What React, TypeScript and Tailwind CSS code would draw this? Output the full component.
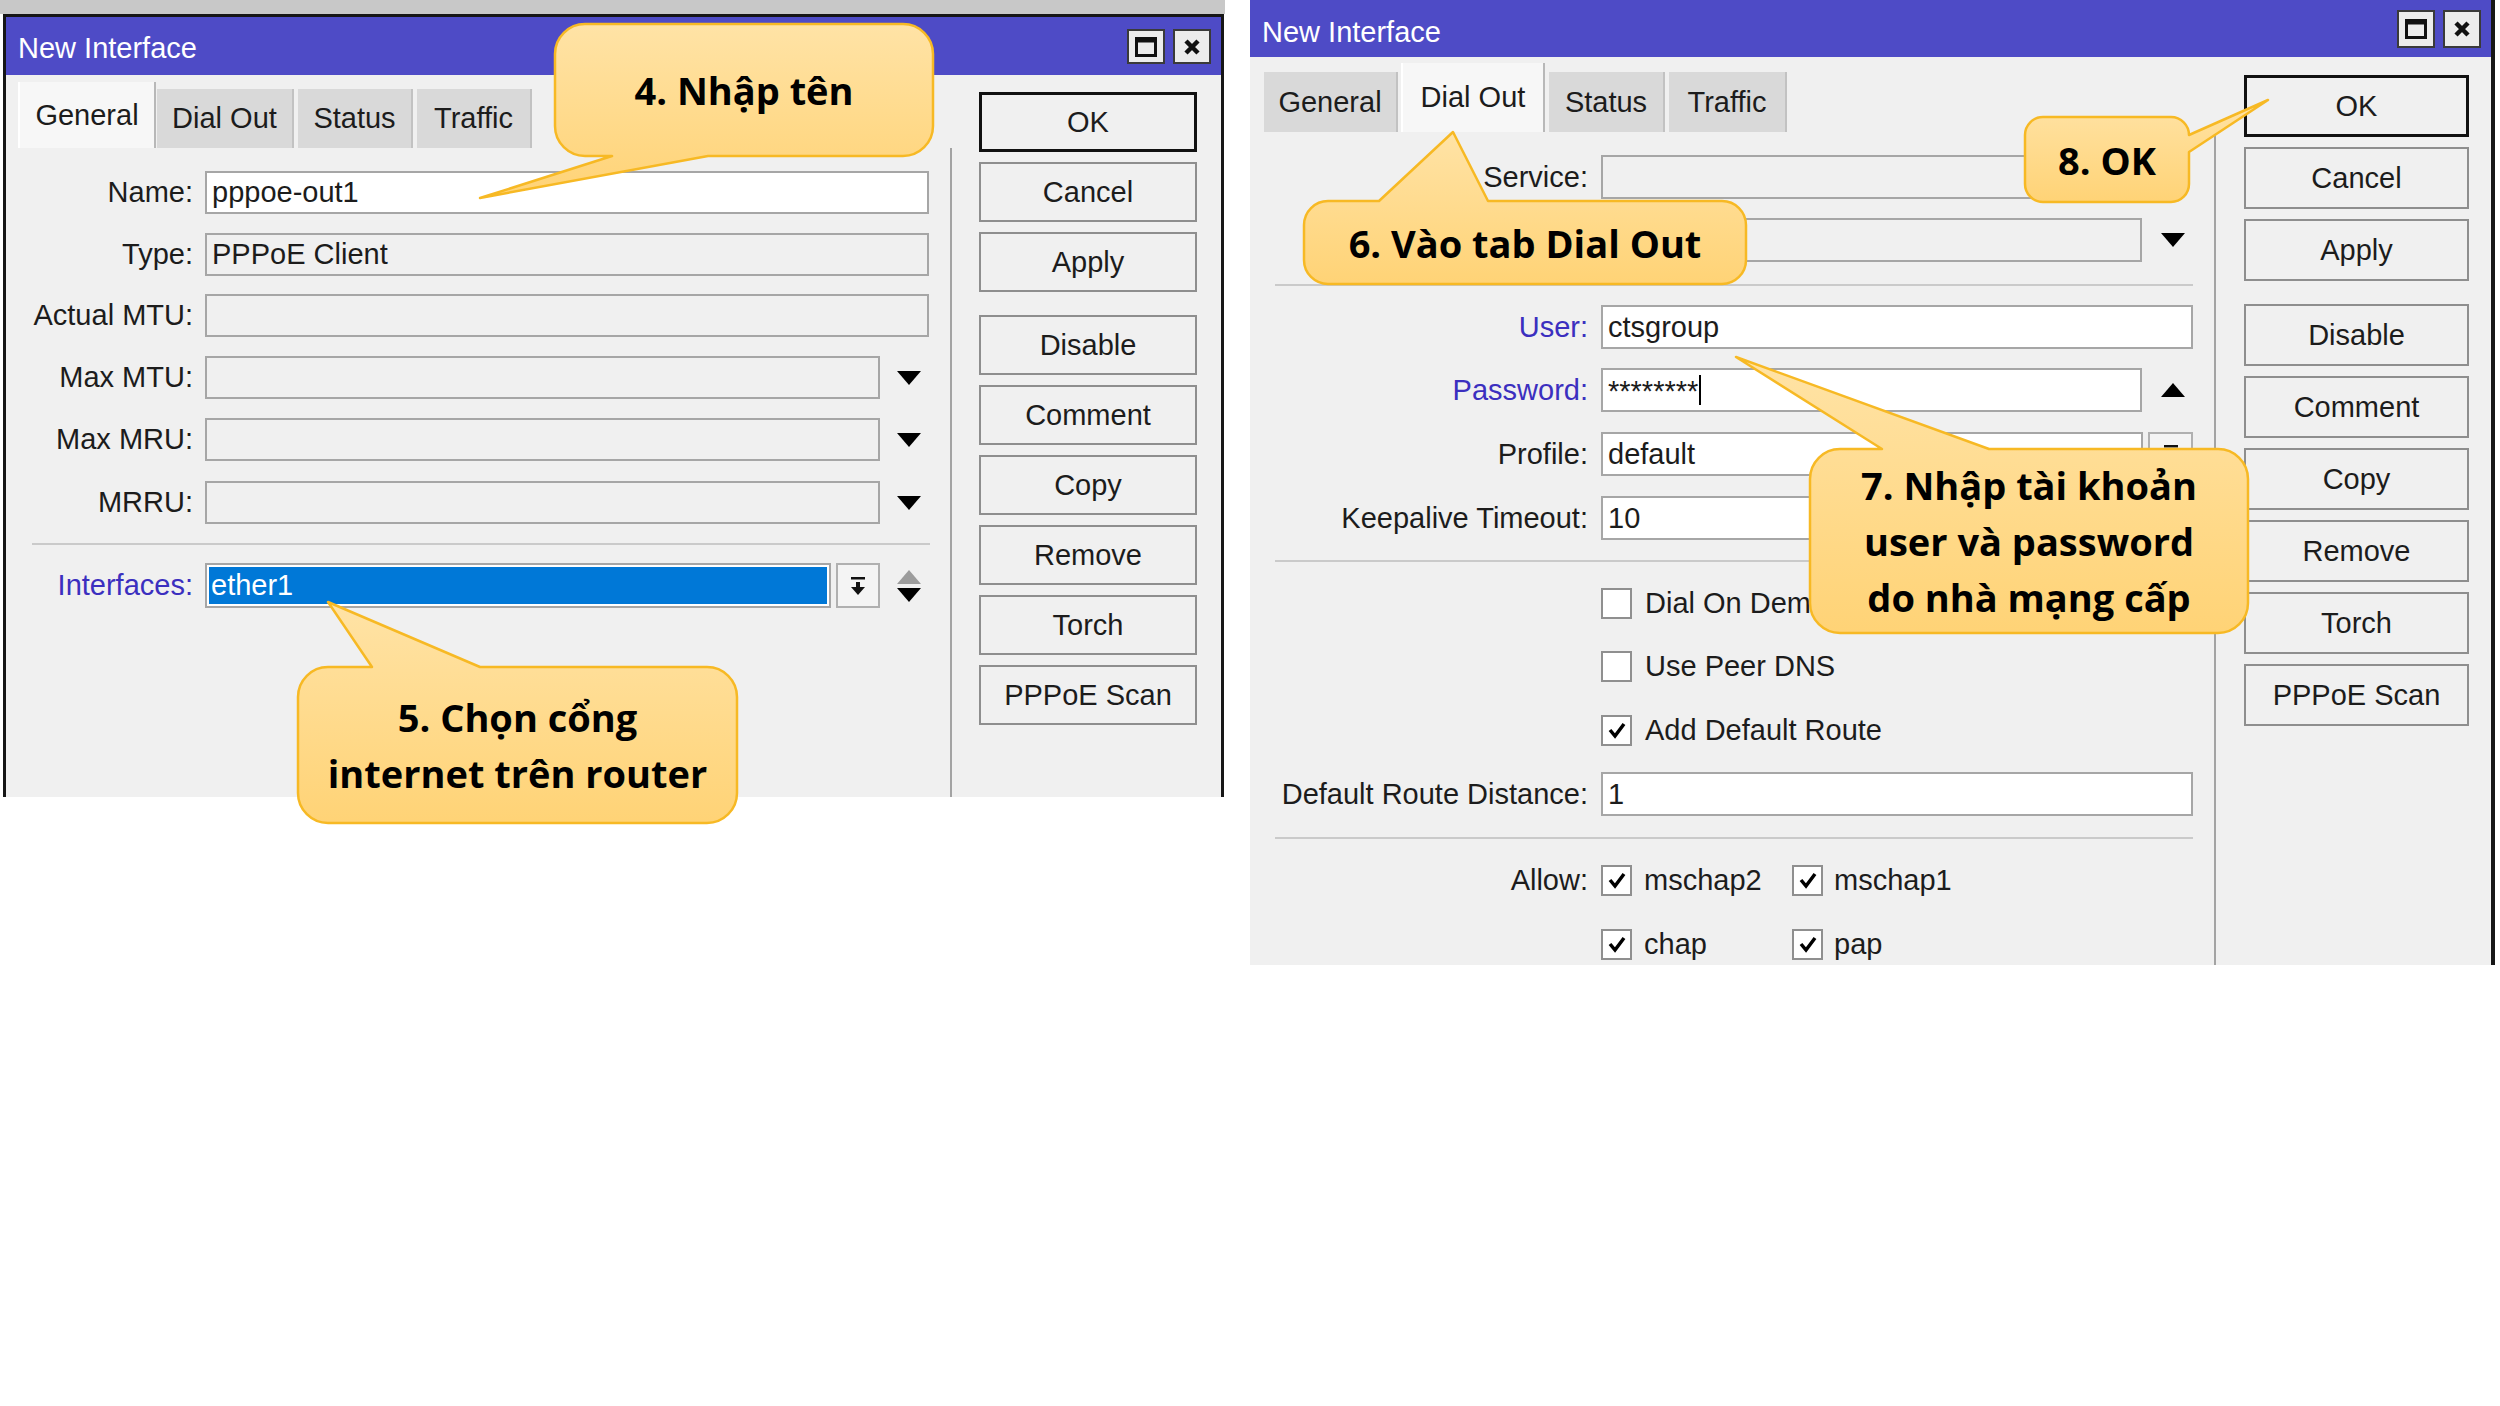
import React from 'react';

type Tail = { side: 'top' | 'bottom' | 'right'; a: number; b: number; tx: number; ty: number };

function bubblePath(w: number, h: number, r: number, t: Tail) {
  let d = `M${r} 0 `;
  if (t.side === 'top') d += `L${t.a} 0 L${t.tx} ${t.ty} L${t.b} 0 `;
  d += `L${w - r} 0 A${r} ${r} 0 0 1 ${w} ${r} `;
  if (t.side === 'right') d += `L${w} ${t.a} L${t.tx} ${t.ty} L${w} ${t.b} `;
  d += `L${w} ${h - r} A${r} ${r} 0 0 1 ${w - r} ${h} `;
  if (t.side === 'bottom') d += `L${t.b} ${h} L${t.tx} ${t.ty} L${t.a} ${h} `;
  d += `L${r} ${h} A${r} ${r} 0 0 1 0 ${h - r} L0 ${r} A${r} ${r} 0 0 1 ${r} 0 Z`;
  return d;
}

const Callout = ({ id, cls, w, h, r, tail, lines }: { id: string; cls: string; w: number; h: number; r: number; tail: Tail; lines: string[] }) => (
  <div className={`absolute ${cls} flex flex-col items-center justify-center`}>
    <svg className="absolute left-0 top-0 overflow-visible" width={w} height={h}>
      <defs>
        <linearGradient id={id} x1="0" y1="0" x2="0" y2="1">
          <stop offset="0" stopColor="#ffe3a6" />
          <stop offset="1" stopColor="#ffd376" />
        </linearGradient>
      </defs>
      <path d={bubblePath(w, h, r, tail)} fill={`url(#${id})`} stroke="#f7b924" strokeWidth="2.5" strokeLinejoin="round" />
    </svg>
    {lines.map((l) => (
      <div key={l} className="relative font-['Open_Sans',sans-serif] font-bold text-[38px] leading-[56px] text-black whitespace-nowrap">
        {l}
      </div>
    ))}
  </div>
);

const Tri = ({ up = false, gray = false }: { up?: boolean; gray?: boolean }) => (
  <svg width="24" height="14" viewBox="0 0 24 14">
    <polygon points={up ? '0,14 24,14 12,0' : '0,0 24,0 12,14'} fill={gray ? '#9c9c9c' : '#000'} />
  </svg>
);

const Label = ({ w, blue, children }: { w: string; blue?: boolean; children?: React.ReactNode }) => (
  <div className={`${w} shrink-0 text-right whitespace-nowrap ${blue ? 'text-[#3b2fbf]' : ''}`}>{children}</div>
);

const Box = ({ cls, white, children }: { cls: string; white?: boolean; children?: React.ReactNode }) => (
  <div className={`${cls} h-full shrink-0 border-2 border-[#a6a6a6] ${white ? 'bg-white' : 'bg-[#f0f0f0]'} flex items-center pl-[5px] overflow-hidden whitespace-nowrap`}>
    {children}
  </div>
);

const Check = ({ on }: { on?: boolean }) => (
  <div className="w-[31px] h-[31px] shrink-0 border-2 border-[#8f8f8f] bg-white flex items-center justify-center">
    {on && (
      <svg width="20" height="18" viewBox="0 0 20 18">
        <path d="M3 9 L8 15 L17 3" stroke="#000" strokeWidth="3.5" fill="none" />
      </svg>
    )}
  </div>
);

const Button = ({ label, ok, cls }: { label: string; ok?: boolean; cls: string }) => (
  <div className={`${cls} shrink-0 flex items-center justify-center bg-[#f0f0f0] ${ok ? 'border-[3px] border-[#111]' : 'border-2 border-[#8e8e8e]'}`}>
    {label}
  </div>
);

const Tab = ({ label, active, cls }: { label: string; active?: boolean; cls: string }) => (
  <div className={`${cls} shrink-0 flex items-center justify-center border-r-2 ${active ? 'bg-[#f7f7f7] border-l-2 border-l-white border-r-[#b8b8b8]' : 'bg-[#d9d9d9] border-r-[#c2c2c2]'}`}>
    {label}
  </div>
);

const TitleButtons = ({ size }: { size: string }) => (
  <div className="flex gap-[8px]">
    <div className={`${size} bg-[#ececec] border-2 border-[#3a3a3a] flex items-center justify-center`}>
      <svg width="22" height="20" viewBox="0 0 22 20">
        <rect x="1.5" y="1.5" width="19" height="17" fill="none" stroke="#111" strokeWidth="3" />
        <rect x="1.5" y="1.5" width="19" height="4" fill="#111" />
      </svg>
    </div>
    <div className={`${size} bg-[#ececec] border-2 border-[#3a3a3a] flex items-center justify-center`}>
      <svg width="18" height="18" viewBox="0 0 18 18">
        <path d="M3 3 L15 15 M15 3 L3 15" stroke="#111" strokeWidth="4.5" />
      </svg>
    </div>
  </div>
);

const PickBtn = ({ cls }: { cls: string }) => (
  <div className={`${cls} h-full shrink-0 border-2 border-[#b0b0b0] bg-[#f4f4f4] flex items-center justify-center`}>
    <svg width="16" height="20" viewBox="0 0 16 20">
      <rect x="1" y="1" width="14" height="2.5" fill="#111" />
      <rect x="6" y="6" width="4" height="6" fill="#111" />
      <polygon points="1,11 15,11 8,19" fill="#111" />
    </svg>
  </div>
);

const leftButtons: [string, string][] = [
  ['OK', ''],
  ['Cancel', 'mt-[10px]'],
  ['Apply', 'mt-[10px]'],
  ['Disable', 'mt-[23px]'],
  ['Comment', 'mt-[10px]'],
  ['Copy', 'mt-[10px]'],
  ['Remove', 'mt-[10px]'],
  ['Torch', 'mt-[10px]'],
  ['PPPoE Scan', 'mt-[10px]'],
];

const LeftDialog = () => (
  <div className="ml-[3px] w-[1221px] h-[783px] border-x-[3px] border-t-[3px] border-[#161616] bg-[#f0f0f0] flex flex-col overflow-hidden">
    <div className="h-[58px] shrink-0 bg-[#4e4bc6] flex items-start justify-between pl-[12px] pr-[10px]">
      <div className="text-white mt-[17px]">New Interface</div>
      <div className="mt-[12px]">
        <TitleButtons size="w-[38px] h-[35px]" />
      </div>
    </div>
    <div className="flex flex-1">
      <div className="w-[946px] shrink-0 flex flex-col">
        <div className="mt-[7px] h-[66px] ml-[12px] flex items-end">
          <Tab label="General" active cls="w-[138px] h-[66px]" />
          <Tab label="Dial Out" cls="ml-[1px] w-[137px] h-[59px]" />
          <Tab label="Status" cls="ml-[4px] w-[115px] h-[59px]" />
          <Tab label="Traffic" cls="ml-[4px] w-[115px] h-[59px]" />
        </div>
        <div className="flex-1 ml-[9px] border-r-2 border-[#a3a3a3] flex flex-col">
          <div className="flex items-center h-[43px] mt-[23px]">
            <Label w="w-[190px] pr-[12px]">Name:</Label>
            <Box cls="w-[724px]" white>pppoe-out1</Box>
          </div>
          <div className="flex items-center h-[43px] mt-[19px]">
            <Label w="w-[190px] pr-[12px]">Type:</Label>
            <Box cls="w-[724px]">PPPoE Client</Box>
          </div>
          <div className="flex items-center h-[43px] mt-[18px]">
            <Label w="w-[190px] pr-[12px]">Actual MTU:</Label>
            <Box cls="w-[724px]" />
          </div>
          {['Max MTU:', 'Max MRU:', 'MRRU:'].map((l, i) => (
            <div key={l} className={`flex items-center h-[43px] ${i === 2 ? 'mt-[20px]' : 'mt-[19px]'}`}>
              <Label w="w-[190px] pr-[12px]">{l}</Label>
              <Box cls="w-[675px]" />
              <div className="w-[58px] h-full flex items-center justify-center">
                <Tri />
              </div>
            </div>
          ))}
          <div className="mt-[19px] h-[2px] ml-[17px] w-[898px] bg-[#cacaca]" />
          <div className="flex items-center h-[45px] mt-[18px]">
            <Label w="w-[190px] pr-[12px]" blue>
              Interfaces:
            </Label>
            <div className="w-[626px] h-full shrink-0 border-2 border-[#a6a6a6] bg-white p-[2px]">
              <div className="h-full bg-[#0078d7] text-white flex items-center pl-[2px]">ether1</div>
            </div>
            <div className="w-[5px]" />
            <PickBtn cls="w-[44px]" />
            <div className="w-[58px] h-full flex flex-col items-center justify-center gap-[4px]">
              <Tri up gray />
              <Tri />
            </div>
          </div>
        </div>
      </div>
      <div className="pl-[27px] pt-[17px] flex flex-col">
        {leftButtons.map(([l, m]) => (
          <Button key={l} label={l} ok={l === 'OK'} cls={`w-[218px] h-[60px] ${m}`} />
        ))}
      </div>
    </div>
  </div>
);

const RightDialog = () => (
  <div className="w-[1245px] h-[965px] border-r-4 border-[#161616] bg-[#f0f0f0] flex flex-col overflow-hidden">
    <div className="h-[57px] shrink-0 bg-[#4e4bc6] flex items-start justify-between pl-[12px] pr-[10px]">
      <div className="text-white mt-[18px]">New Interface</div>
      <div className="mt-[10px]">
        <TitleButtons size="w-[38px] h-[38px]" />
      </div>
    </div>
    <div className="flex flex-1">
      <div className="w-[966px] shrink-0 flex flex-col">
        <div className="mt-[6px] h-[69px] ml-[14px] flex items-end">
          <Tab label="General" cls="w-[134px] h-[60px]" />
          <Tab label="Dial Out" active cls="ml-[3px] w-[144px] h-[69px]" />
          <Tab label="Status" cls="ml-[4px] w-[116px] h-[60px]" />
          <Tab label="Traffic" cls="ml-[4px] w-[118px] h-[60px]" />
        </div>
        <div className="flex-1 border-r-2 border-[#a3a3a3] flex flex-col">
          <div className="flex items-center h-[44px] mt-[23px]">
            <Label w="w-[351px] pr-[13px]">Service:</Label>
            <Box cls="w-[541px]" />
            <div className="w-[62px] h-full flex items-center justify-center">
              <Tri />
            </div>
          </div>
          <div className="flex items-center h-[44px] mt-[19px]">
            <div className="w-[351px] shrink-0" />
            <Box cls="w-[541px]" />
            <div className="w-[62px] h-full flex items-center justify-center">
              <Tri />
            </div>
          </div>
          <div className="mt-[22px] h-[2px] ml-[25px] w-[918px] bg-[#cacaca]" />
          <div className="flex items-center h-[44px] mt-[19px]">
            <Label w="w-[351px] pr-[13px]" blue>
              User:
            </Label>
            <Box cls="w-[592px]" white>
              ctsgroup
            </Box>
          </div>
          <div className="flex items-center h-[44px] mt-[19px]">
            <Label w="w-[351px] pr-[13px]" blue>
              Password:
            </Label>
            <Box cls="w-[541px]" white>
              <span className="pt-[2px]">********</span>
              <span className="ml-[1px] w-[2px] h-[30px] bg-black" />
            </Box>
            <div className="w-[62px] h-full flex items-center justify-center">
              <Tri up />
            </div>
          </div>
          <div className="flex items-center h-[44px] mt-[20px]">
            <Label w="w-[351px] pr-[13px]">Profile:</Label>
            <Box cls="w-[542px]" white>
              default
            </Box>
            <div className="w-[5px]" />
            <PickBtn cls="w-[45px]" />
          </div>
          <div className="flex items-center h-[44px] mt-[20px]">
            <Label w="w-[351px] pr-[13px]">Keepalive Timeout:</Label>
            <Box cls="w-[592px]" white>
              10
            </Box>
          </div>
          <div className="mt-[20px] h-[2px] ml-[25px] w-[918px] bg-[#cacaca]" />
          {[
            ['Dial On Demand', false, 'mt-[19px]'],
            ['Use Peer DNS', false, 'mt-[19px]'],
            ['Add Default Route', true, 'mt-[20px]'],
          ].map(([l, on, m]) => (
            <div key={l as string} className={`flex items-center h-[44px] ${m}`}>
              <div className="w-[351px] shrink-0" />
              <Check on={on as boolean} />
              <div className="ml-[13px] whitespace-nowrap">{l as string}</div>
            </div>
          ))}
          <div className="flex items-center h-[44px] mt-[20px]">
            <Label w="w-[351px] pr-[13px]">Default Route Distance:</Label>
            <Box cls="w-[592px]" white>
              1
            </Box>
          </div>
          <div className="mt-[21px] h-[2px] ml-[25px] w-[918px] bg-[#cacaca]" />
          <div className="flex items-center h-[44px] mt-[19px]">
            <Label w="w-[351px] pr-[13px]">Allow:</Label>
            <div className="w-[191px] shrink-0 flex items-center">
              <Check on />
              <div className="ml-[12px]">mschap2</div>
            </div>
            <Check on />
            <div className="ml-[11px]">mschap1</div>
          </div>
          <div className="flex items-center h-[44px] mt-[20px]">
            <div className="w-[351px] shrink-0" />
            <div className="w-[191px] shrink-0 flex items-center">
              <Check on />
              <div className="ml-[12px]">chap</div>
            </div>
            <Check on />
            <div className="ml-[11px]">pap</div>
          </div>
        </div>
      </div>
      <div className="pl-[28px] pt-[18px] flex flex-col">
        {leftButtons.map(([l, m]) => (
          <Button key={l} label={l} ok={l === 'OK'} cls={`w-[225px] h-[62px] ${m}`} />
        ))}
      </div>
    </div>
  </div>
);

export default function App() {
  return (
    <div className="relative w-[2500px] h-[1406px] bg-white overflow-hidden flex items-start font-['Liberation_Sans',Arial,sans-serif] text-[29px] leading-none text-[#1c1c1c]">
      <div className="w-[1225px] shrink-0 flex flex-col">
        <div className="h-[14px] bg-[#c8c8c8]" />
        <LeftDialog />
      </div>
      <div className="ml-[25px] w-[1245px] shrink-0">
        <RightDialog />
      </div>

      <Callout
        id="c4"
        cls="left-[555px] top-[24px] w-[378px] h-[132px]"
        w={378}
        h={132}
        r={30}
        tail={{ side: 'bottom', a: 57, b: 153, tx: -75, ty: 174 }}
        lines={['4. Nhập tên']}
      />
      <Callout
        id="c5"
        cls="left-[298px] top-[667px] w-[439px] h-[156px]"
        w={439}
        h={156}
        r={30}
        tail={{ side: 'top', a: 74, b: 182, tx: 30, ty: -65 }}
        lines={['5. Chọn cổng', 'internet trên router']}
      />
      <Callout
        id="c6"
        cls="left-[1304px] top-[201px] w-[442px] h-[83px]"
        w={442}
        h={83}
        r={24}
        tail={{ side: 'top', a: 75, b: 184, tx: 149, ty: -69 }}
        lines={['6. Vào tab Dial Out']}
      />
      <Callout
        id="c8"
        cls="left-[2025px] top-[117px] w-[164px] h-[85px]"
        w={164}
        h={85}
        r={18}
        tail={{ side: 'right', a: 18, b: 35, tx: 243, ty: -17 }}
        lines={['8. OK']}
      />
      <Callout
        id="c7"
        cls="left-[1810px] top-[449px] w-[438px] h-[184px]"
        w={438}
        h={184}
        r={30}
        tail={{ side: 'top', a: 72, b: 179, tx: -74, ty: -92 }}
        lines={['7. Nhập tài khoản', 'user và password', 'do nhà mạng cấp']}
      />
    </div>
  );
}
